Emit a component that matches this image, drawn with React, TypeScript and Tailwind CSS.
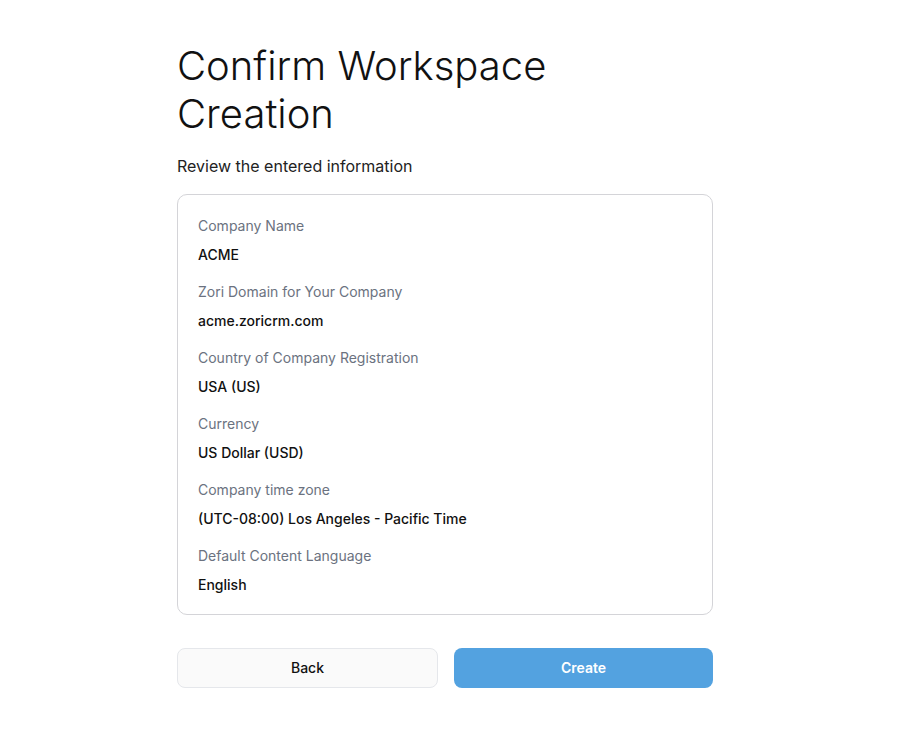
import React from 'react';

const rows: { label: string; value: string }[] = [
  { label: 'Company Name', value: 'ACME' },
  { label: 'Zori Domain for Your Company', value: 'acme.zoricrm.com' },
  { label: 'Country of Company Registration', value: 'USA (US)' },
  { label: 'Currency', value: 'US Dollar (USD)' },
  { label: 'Company time zone', value: '(UTC-08:00) Los Angeles - Pacific Time' },
  { label: 'Default Content Language', value: 'English' },
];

const App: React.FC = () => {
  return (
    <div className="min-h-screen bg-white font-['Inter',sans-serif] text-[#1a1a1a]">
      <div className="w-[536px] pt-[42px] ml-[177px]">
        <h1 className="text-[40px] font-light leading-[48px] text-[#111]">
          Confirm Workspace
          <br />
          Creation
        </h1>
        <p className="mt-[16px] text-base leading-6 text-[#222]">Review the entered information</p>

        <div className="mt-[16px] rounded-[10px] border border-[#d4d4d8] px-[20px] pt-[21px] pb-[19px]">
          {rows.map((row, i) => (
            <div key={row.label} className={i > 0 ? 'mt-[17px]' : ''}>
              <div className="text-sm leading-5 text-[#6b7280]">{row.label}</div>
              <div className="mt-[9px] text-sm font-medium leading-5 text-[#111]">{row.value}</div>
            </div>
          ))}
        </div>

        <div className="mt-[33px] flex gap-4">
          <button className="h-10 flex-1 rounded-lg border border-[#e5e7eb] bg-[#fafafa] text-sm font-medium text-[#111]">
            Back
          </button>
          <button className="h-10 flex-1 rounded-lg bg-[#53a2e0] text-sm font-semibold text-white">
            Create
          </button>
        </div>
      </div>
    </div>
  );
};

export default App;
